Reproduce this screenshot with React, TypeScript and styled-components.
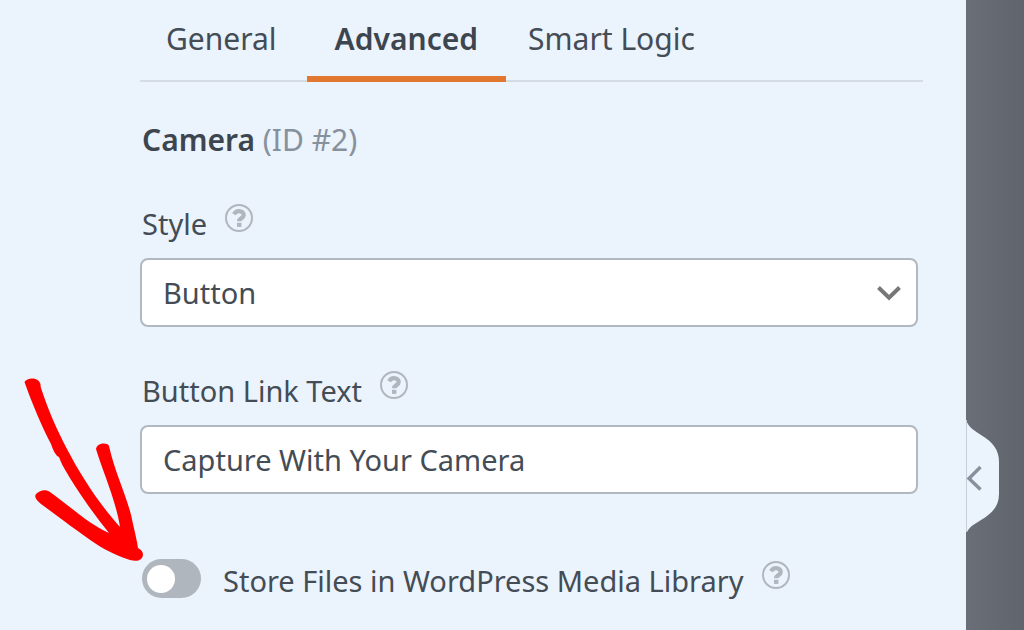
import React, { useState } from "react";
import styled, { createGlobalStyle } from "styled-components";

const color = {
  panel: "#ebf3fc",
  text: "#444c55",
  strong: "#3d454e",
  muted: "#86919d",
  border: "#b0b8c0",
  line: "#d5dce4",
  accent: "#e27730",
  icon: "#b0b6bd",
};

const GlobalStyle = createGlobalStyle`
  *, *::before, *::after { box-sizing: border-box; }
  body {
    margin: 0;
    background: ${color.panel};
    color: ${color.text};
    font-family: "Noto Sans", "Open Sans", sans-serif;
    font-size: 29px;
    line-height: 44px;
  }
  button, input, select { font: inherit; color: inherit; }
`;

const Page = styled.div`
  display: flex;
  min-height: 100vh;
  overflow: hidden;
`;

const Panel = styled.main`
  position: relative;
  flex: 1;
  min-width: 0;
  padding: 0 43px 24px 140px;
`;

const Backdrop = styled.aside`
  flex: 0 0 58px;
  background: linear-gradient(90deg, #6a6e76, #60646c);
`;

const Tabs = styled.nav`
  display: flex;
  height: 82px;
  border-bottom: 2px solid ${color.line};
`;

const Tab = styled.button<{ $active?: boolean }>`
  height: 82px;
  margin: ${(p) => (p.$active ? "0 -4px 0 4px" : "0")};
  padding: 17px ${(p) => (p.$active ? 28 : 26)}px 15px;
  border: 0;
  border-bottom: 6px solid ${(p) => (p.$active ? color.accent : "transparent")};
  background: none;
  color: ${(p) => (p.$active ? color.strong : color.text)};
  font-size: 30px;
  font-weight: ${(p) => (p.$active ? 600 : 400)};
  white-space: nowrap;
  cursor: pointer;
`;

const Heading = styled.h1`
  margin: 36px 0 40px;
  padding-left: 2px;
  color: ${color.strong};
  font-size: 30px;
  font-weight: 600;
`;

const FieldId = styled.span`
  color: ${color.muted};
  font-weight: 400;
`;

const Field = styled.div`
  margin: 0 5px 42px 0;
`;

const LabelRow = styled.div`
  display: flex;
  align-items: flex-start;
  gap: 18px;
  padding-left: 2px;
  margin-bottom: 12px;
`;

const ToggleRow = styled.div`
  display: flex;
  align-items: flex-start;
  gap: 18px;
  margin-top: 65px;
  padding-left: 2px;
`;

const Help = styled.button`
  display: flex;
  margin-top: 2px;
  padding: 0;
  border: 0;
  background: none;
  color: ${color.icon};
  cursor: help;
`;

const SelectBox = styled.div`
  display: grid;
  align-items: center;

  > * { grid-area: 1 / 1; }
  > svg {
    justify-self: end;
    margin-right: 16px;
    pointer-events: none;
  }
`;

const control = `
  width: 100%;
  height: 69px;
  padding: 0 21px;
  border: 2px solid ${color.border};
  border-radius: 8px;
  background: #fff;
  appearance: none;
`;

const Select = styled.select`${control}`;
const TextInput = styled.input`${control}`;

const Switch = styled.input`
  appearance: none;
  flex: none;
  width: 59px;
  height: 39px;
  margin: 0 4px 0 0;
  padding: 6px 5px;
  border-radius: 20px;
  background: ${color.icon};
  cursor: pointer;

  &::before {
    content: "";
    display: block;
    width: 28px;
    height: 28px;
    border-radius: 50%;
    background: #fff;
  }
  &:checked { background: ${color.accent}; }
  &:checked::before { margin-left: 21px; }
`;

const CollapseHandle = styled.button`
  position: absolute;
  top: 420px;
  left: 100%;
  padding: 0;
  border: 0;
  background: none;
  cursor: pointer;
  svg { display: block; }
`;

const ArrowMark = styled.svg`
  position: absolute;
  top: 376px;
  left: 22px;
  pointer-events: none;
`;

function HelpIcon({ about }: { about: string }) {
  return (
    <Help type="button" aria-label={`Help: ${about}`}>
      <svg width="28" height="28" viewBox="0 0 28 28" fill="none" stroke="currentColor">
        <circle cx="14" cy="14" r="13" strokeWidth="2" />
        <path d="M9 10.3C10.2 8.1 11.8 7.2 14 7.2C16.7 7.2 18.7 8.8 18.7 11C18.7 14.2 14.2 14 14.2 17.2" strokeWidth="4.3" />
        <path d="M12 18.8H16.4V22.9H12Z" fill="currentColor" stroke="none" />
      </svg>
    </Help>
  );
}

const tabs = ["General", "Advanced", "Smart Logic"];

export default function App() {
  const [active, setActive] = useState("Advanced");
  const [linkText, setLinkText] = useState("Capture With Your Camera");
  const [store, setStore] = useState(false);

  return (
    <Page>
      <GlobalStyle />
      <Panel>
        <Tabs>
          {tabs.map((t) => (
            <Tab key={t} type="button" $active={t === active} onClick={() => setActive(t)}>
              {t}
            </Tab>
          ))}
        </Tabs>
        <Heading>
          Camera <FieldId>(ID #2)</FieldId>
        </Heading>
        <Field>
          <LabelRow>
            <label htmlFor="style">Style</label>
            <HelpIcon about="Style" />
          </LabelRow>
          <SelectBox>
            <Select id="style" defaultValue="Button">
              <option>Button</option>
              <option>Link</option>
            </Select>
            <svg width="26" height="16" viewBox="0 0 26 16" fill="none" stroke="#777" strokeWidth="4">
              <path d="M2.5 2.5L13 12.7L23.5 2.5" />
            </svg>
          </SelectBox>
        </Field>
        <Field>
          <LabelRow>
            <label htmlFor="link-text">Button Link Text</label>
            <HelpIcon about="Button Link Text" />
          </LabelRow>
          <TextInput id="link-text" type="text" value={linkText} onChange={(e) => setLinkText(e.target.value)} />
        </Field>
        <ToggleRow>
          <Switch id="store" type="checkbox" role="switch" checked={store} onChange={(e) => setStore(e.target.checked)} />
          <label htmlFor="store">Store Files in WordPress Media Library</label>
          <HelpIcon about="Store Files in WordPress Media Library" />
        </ToggleRow>
        <CollapseHandle type="button" aria-label="Collapse panel">
          <svg width="34" height="113" viewBox="0 0 34 113" fill="none">
            <path d="M0 0C3 8 9 11 15 15C27 22 33 30 33 42V74C33 87 25 94 15 100C9 104 4 106 1 112H0Z" fill={color.panel} />
            <path d="M0.5 0V112" stroke="#c6ced6" />
            <path d="M14.5 47L3 58.5L14.5 69.5" stroke={color.muted} strokeWidth="3.4" />
          </svg>
        </CollapseHandle>
        <ArrowMark width="124" height="188" viewBox="22 376 124 188" fill="#f00">
          <path d="M24.5 382C27 377.500 38 376.500 40.500 384C40.500 387 41 388 42 391C48 409 56 428 67 449C82 478 101 506 120 527C116 501 103 472 96 449C97 443 107 442 109 446C116 477 128 497 133 524C135 533 137 541 138 548C144 551 144 556 141 559C138 561.500 134 561 130 560C112 554 98 546 86 537C69 525 56 515 41 504C36 500 34 497 36 494C40 490 46 489 50 492C70 506 87 523 109 533C92 512 77 490 67 473C64 468 61 463 59 457C56 456 53 450 51 444C41 425 32 403 24.500 382Z" />
        </ArrowMark>
      </Panel>
      <Backdrop />
    </Page>
  );
}
